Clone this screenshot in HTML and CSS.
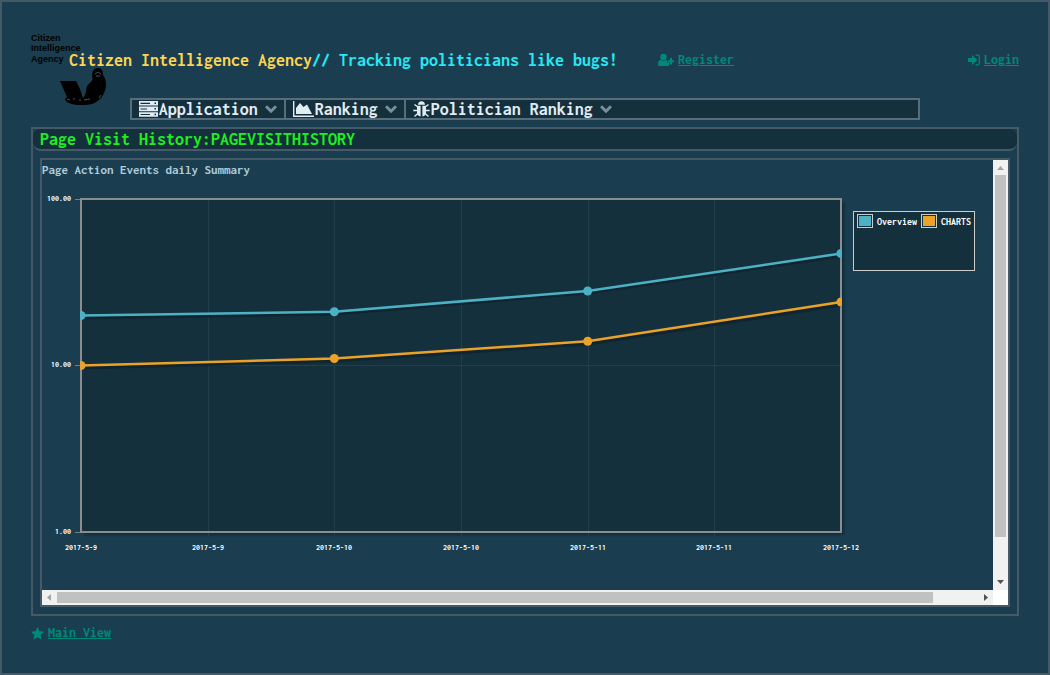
FILE: index.html
```html
<!DOCTYPE html>
<html lang="en">
<head>
<meta charset="utf-8">
<meta name="viewport" content="width=device-width, initial-scale=1">
<title>Citizen Intelligence Agency</title>
<link rel="stylesheet" href="styles.css">
</head>
<body>
<div class="page">
  <header class="header">
    <svg class="logo" width="78" height="76" viewBox="0 0 78 76" aria-hidden="true">
      <g class="logo-text">
        <text x="0" y="9">Citizen</text>
        <text x="0" y="19">Intelligence</text>
        <text x="0" y="30">Agency</text>
      </g>
      <path d="M29 49H45L49 57L52 66C57 61 53 55 59 51C62 48 62 47 61 44C61 39 63 36 67 36C71 36 72 39 72 43C76 48 76 56 72 63C67 72 59 73 50 73C42 73 35 71 34 67L36 65Z"/>
      <path class="logo-line" d="M36 67L39 68M42 67H44M48 68H50M53 68L59 67M64 42L67 40L70 42M65 44H69M68 66L70 63"/>
    </svg>
    <h1 class="title"><span class="name">Citizen Intelligence Agency</span><span class="tagline">// Tracking politicians like bugs!</span></h1>
    <a class="link register" href="#register">
      <svg width="16" height="14" viewBox="0 0 16 14" aria-hidden="true"><circle cx="5.500" cy="4" r="3.200"/><path d="M0 11.500C0 8.500 1 7 3 6.800Q5.500 8.600 8 6.800L9 7.200V9.500H11V12.500Q10.500 13 9.500 13H1.500Q0 13 0 11.500ZM12 5H14V7.200H16V9.200H14V11.500H12V9.200H9.800V7.200H12Z"/></svg>
      <span>Register</span>
    </a>
    <a class="link login" href="#login">
      <svg width="12" height="12" viewBox="0 0 12 12" aria-hidden="true"><path d="M0 4H4V1L9.300 6L4 11V8H0Z"/><path d="M7.500 1.200H9.500Q11.300 1.200 11.300 3V9Q11.300 10.800 9.500 10.800H7.500" class="stroke"/></svg>
      <span>Login</span>
    </a>
  </header>

  <nav class="menu">
    <button class="menu-item" type="button">
      <svg width="19" height="16" viewBox="0 0 19 16" aria-hidden="true"><path fill-rule="evenodd" d="M0 0H19V4.600H0ZM1.500 1.800V2.900H11V1.800ZM15.500 1.500V3H17V1.500ZM0 5.600H19V10.200H0ZM1.500 7.400V8.500H8V7.400ZM15.500 7.100V8.600H17V7.100ZM0 11.200H19V15.800H0ZM1.500 13V14.100H11V13ZM15.500 12.700V14.200H17V12.700Z"/></svg>
      <span>Application</span>
      <svg class="chevron" width="12" height="8" viewBox="0 0 12 8" aria-hidden="true"><path d="M1 1.200L6 6.200L11 1.200"/></svg>
    </button>
    <button class="menu-item" type="button">
      <svg width="21" height="16" viewBox="0 0 21 16" aria-hidden="true"><path d="M0 0H1.400V14.600H21V16H0ZM3 13V7L7 2L10.500 6L14 3.500L19 13Z"/></svg>
      <span>Ranking</span>
      <svg class="chevron" width="12" height="8" viewBox="0 0 12 8" aria-hidden="true"><path d="M1 1.200L6 6.200L11 1.200"/></svg>
    </button>
    <button class="menu-item" type="button">
      <svg width="17" height="17" viewBox="0 0 17 17" aria-hidden="true"><path d="M5 3.800Q5.200 .3 8.500 .3T12 3.800ZM4 4.800H7.600V15.500Q4 15 4 11.500ZM9.400 4.800H13V11.500Q13 15 9.400 15.500Z"/><path class="legs" d="M1.500 3.500L4.800 6M.3 9.500H4M1.500 15.500L4.800 12.500M15.500 3.500L12.200 6M16.700 9.500H13M15.500 15.500L12.200 12.500"/></svg>
      <span>Politician Ranking</span>
      <svg class="chevron" width="12" height="8" viewBox="0 0 12 8" aria-hidden="true"><path d="M1 1.200L6 6.200L11 1.200"/></svg>
    </button>
  </nav>

  <main class="panel">
    <h2 class="panel-title">Page Visit History:PAGEVISITHISTORY</h2>
    <div class="frame">
      <section class="view">
        <h3 class="chart-title">Page Action Events daily Summary</h3>
        <svg class="chart" width="951" height="400" viewBox="0 0 951 400" role="img" aria-label="Page action events per day">
          <defs>
            <clipPath id="plot-clip"><rect x="38" y="18" width="762" height="335"/></clipPath>
            <filter id="soft" x="-5%" y="-5%" width="110%" height="115%"><feGaussianBlur stdDeviation="1.500"/></filter>
          </defs>
          <rect class="plot-shadow" x="42" y="22" width="760" height="333" filter="url(#soft)"/>
          <rect class="plot" x="39" y="19" width="760" height="333"/>
          <path class="grid" d="M166.500 20V358M292.500 20V358M419.500 20V358M546.500 20V358M672.500 20V358M39.500 354V358M799.500 354V358M40 185.500H798"/>
          <path class="tick" d="M33 19.500H38M33 185.500H38M33 352.500H38"/>
          <rect class="plot-border" x="39" y="19" width="760" height="333"/>
          <g clip-path="url(#plot-clip)">
            <path class="line-shadow" d="M39 138L292 134L546 113L799 76M39 188L292 181L546 164L799 125"/>
            <path class="line overview" d="M39 135.500L292.300 131.800L545.700 111L799 73.500"/>
            <path class="line charts" d="M39 185.500L292.300 178.500L545.700 161.200L799 122"/>
            <g class="dot-overview"><circle cx="39" cy="135.500" r="4.500"/><circle cx="292.300" cy="131.800" r="4.500"/><circle cx="545.700" cy="111" r="4.500"/><circle cx="799" cy="73.500" r="4.500"/></g>
            <g class="dot-charts"><circle cx="39" cy="185.500" r="4.500"/><circle cx="292.300" cy="178.500" r="4.500"/><circle cx="545.700" cy="161.200" r="4.500"/><circle cx="799" cy="122" r="4.500"/></g>
          </g>
          <g class="axis axis-y">
            <text x="29" y="21">100.00</text>
            <text x="29" y="187">10.00</text>
            <text x="29" y="354">1.00</text>
          </g>
          <g class="axis axis-x">
            <text x="39" y="370">2017-5-9</text>
            <text x="166" y="370">2017-5-9</text>
            <text x="292" y="370">2017-5-10</text>
            <text x="419" y="370">2017-5-10</text>
            <text x="546" y="370">2017-5-11</text>
            <text x="672" y="370">2017-5-11</text>
            <text x="799" y="370">2017-5-12</text>
          </g>
          <g class="legend">
            <rect class="legend-box" x="811.500" y="31.500" width="121" height="59"/>
            <rect class="legend-box" x="815.500" y="34.500" width="15" height="13"/>
            <rect class="dot-overview" x="817" y="36" width="12" height="10"/>
            <text x="835" y="45">Overview</text>
            <rect class="legend-box" x="879.500" y="34.500" width="15" height="13"/>
            <rect class="dot-charts" x="881" y="36" width="12" height="10"/>
            <text x="899" y="45">CHARTS</text>
          </g>
        </svg>
      </section>
      <div class="bar bar-v" aria-hidden="true">
        <svg class="arrow off" width="15" height="15" viewBox="0 0 15 15"><path d="M4 10L7.500 6L11 10Z"/></svg>
        <div class="track"><div class="thumb"></div></div>
        <svg class="arrow" width="15" height="15" viewBox="0 0 15 15"><path d="M4 5L7.500 9L11 5Z"/></svg>
      </div>
      <div class="bar bar-h" aria-hidden="true">
        <svg class="arrow off" width="15" height="15" viewBox="0 0 15 15"><path d="M9 4L5 7.500L9 11Z"/></svg>
        <div class="track"><div class="thumb"></div></div>
        <svg class="arrow" width="15" height="15" viewBox="0 0 15 15"><path d="M6 4L10 7.500L6 11Z"/></svg>
      </div>
      <div class="corner"></div>
    </div>
  </main>

  <footer class="footer">
    <a class="link" href="#main">
      <svg width="13" height="13" viewBox="0 0 13 13" aria-hidden="true"><path d="M6.500 0L8.400 4.200L13 4.700L9.600 7.900L10.500 12.600L6.500 10.300L2.500 12.600L3.400 7.900L0 4.700L4.600 4.200Z"/></svg>
      <span>Main View</span>
    </a>
  </footer>
</div>
</body>
</html>
```
FILE: styles.css
```css
* { box-sizing: border-box; }

body {
  margin: 0;
  background: #1a3e50;
  color: #e1edf4;
  font-family: Inconsolata, "Noto Sans Mono CJK JP", "Liberation Mono", monospace;
}

h1, h2, h3 { margin: 0; font-weight: 700; }

svg { flex: none; }

.page {
  display: flex;
  flex-direction: column;
  min-height: 100vh;
  padding: 29px;
  border: 2px solid #455a66;
}

.header {
  position: relative;
  display: flex;
  align-items: center;
  height: 58px;
  padding-left: 38px;
}

.logo {
  position: absolute;
  left: 0;
  top: 1px;
}

.logo-text {
  font: 700 9px "Liberation Sans", Arial, sans-serif;
}

.logo-line { fill: none; stroke: #46525a; stroke-width: 1; }

.title {
  position: relative;
  font-size: 18px;
  line-height: 24px;
  white-space: pre;
}

.name { color: #ffd54f; }
.tagline { color: #26e8f4; }

.link {
  display: flex;
  align-items: center;
  gap: 4px;
  color: #00897b;
  font-size: 14px;
  font-weight: 700;
  line-height: 18px;
  text-decoration: none;
  white-space: nowrap;
}

.link span { text-decoration: underline; }
.link svg { fill: currentColor; }
.link .stroke { fill: none; stroke: currentColor; stroke-width: 1.2; }

.register { margin-left: 40px; }
.login { margin-left: auto; }

.menu {
  display: flex;
  width: 80%;
  height: 22px;
  margin: 9px auto 7px;
  background: #14303d;
  border: 2px solid #586d79;
}

.menu-item {
  display: flex;
  align-items: center;
  gap: 1px;
  padding: 0 7px;
  border: 0;
  border-right: 2px solid #586d79;
  background: none;
  color: #e1edf4;
  font: inherit;
  font-size: 18px;
  font-weight: 700;
  line-height: 18px;
  white-space: nowrap;
}

.menu-item:last-child { border-right: 0; }
.menu-item svg { fill: currentColor; }
.menu-item .legs { fill: none; stroke: currentColor; stroke-width: 1.4; }
.menu-item .chevron { margin-left: 6px; fill: none; stroke: #78909c; stroke-width: 3; }

.panel {
  display: flex;
  flex: 1;
  flex-direction: column;
  border: 2px solid #455a66;
}

.panel-title {
  height: 22px;
  padding: 0 7px;
  border-bottom: 2px solid #455a66;
  border-radius: 8px;
  background: #14303d;
  color: #1fee1f;
  font-size: 18px;
  line-height: 20px;
}

.frame {
  display: grid;
  flex: 1;
  grid-template-columns: minmax(0, 1fr) 15px;
  grid-template-rows: minmax(0, 1fr) 15px;
  margin: 7px;
  border: 2px solid #455a66;
}

.view { overflow: hidden; }

.chart-title {
  color: #b0ccdb;
  font-size: 13px;
  line-height: 20px;
}

.chart { display: block; }

.plot { fill: #14303d; }
.plot-shadow { fill: #102a37; }
.plot-border { fill: none; stroke: #8b8d8f; stroke-width: 2; }
.grid { fill: none; stroke: #213f49; }
.tick { fill: none; stroke: #738087; }
.line { fill: none; stroke-width: 2.5; }
.line-shadow { fill: none; stroke: #10252f; stroke-width: 3; }
.overview { stroke: #4bb2c5; }
.charts { stroke: #eaa228; }
.dot-overview { fill: #4bb2c5; }
.dot-charts { fill: #eaa228; }

.axis { fill: #fff; font-size: 8px; font-weight: 700; }
.axis-y { text-anchor: end; }
.axis-x { text-anchor: middle; }

.legend { fill: #fff; font-size: 10px; font-weight: 700; }
.legend-box { fill: #14303d; stroke: #ccc; }

.bar { display: flex; background: #f1f1f1; }
.bar-v { flex-direction: column; }
.track { flex: 1; }
.thumb { background: #c1c1c1; }
.bar-v .track { padding: 0 2px; }
.bar-h .track { padding: 2px 0; }
.bar-v .thumb { height: 90.5%; }
.bar-h .thumb { width: 95.1%; height: 100%; }
.arrow { fill: #505050; }
.arrow.off { fill: #a3a3a3; }
.corner { background: #fff; }

.footer {
  display: flex;
  align-items: flex-start;
  height: 28px;
  padding-top: 8px;
}
```
